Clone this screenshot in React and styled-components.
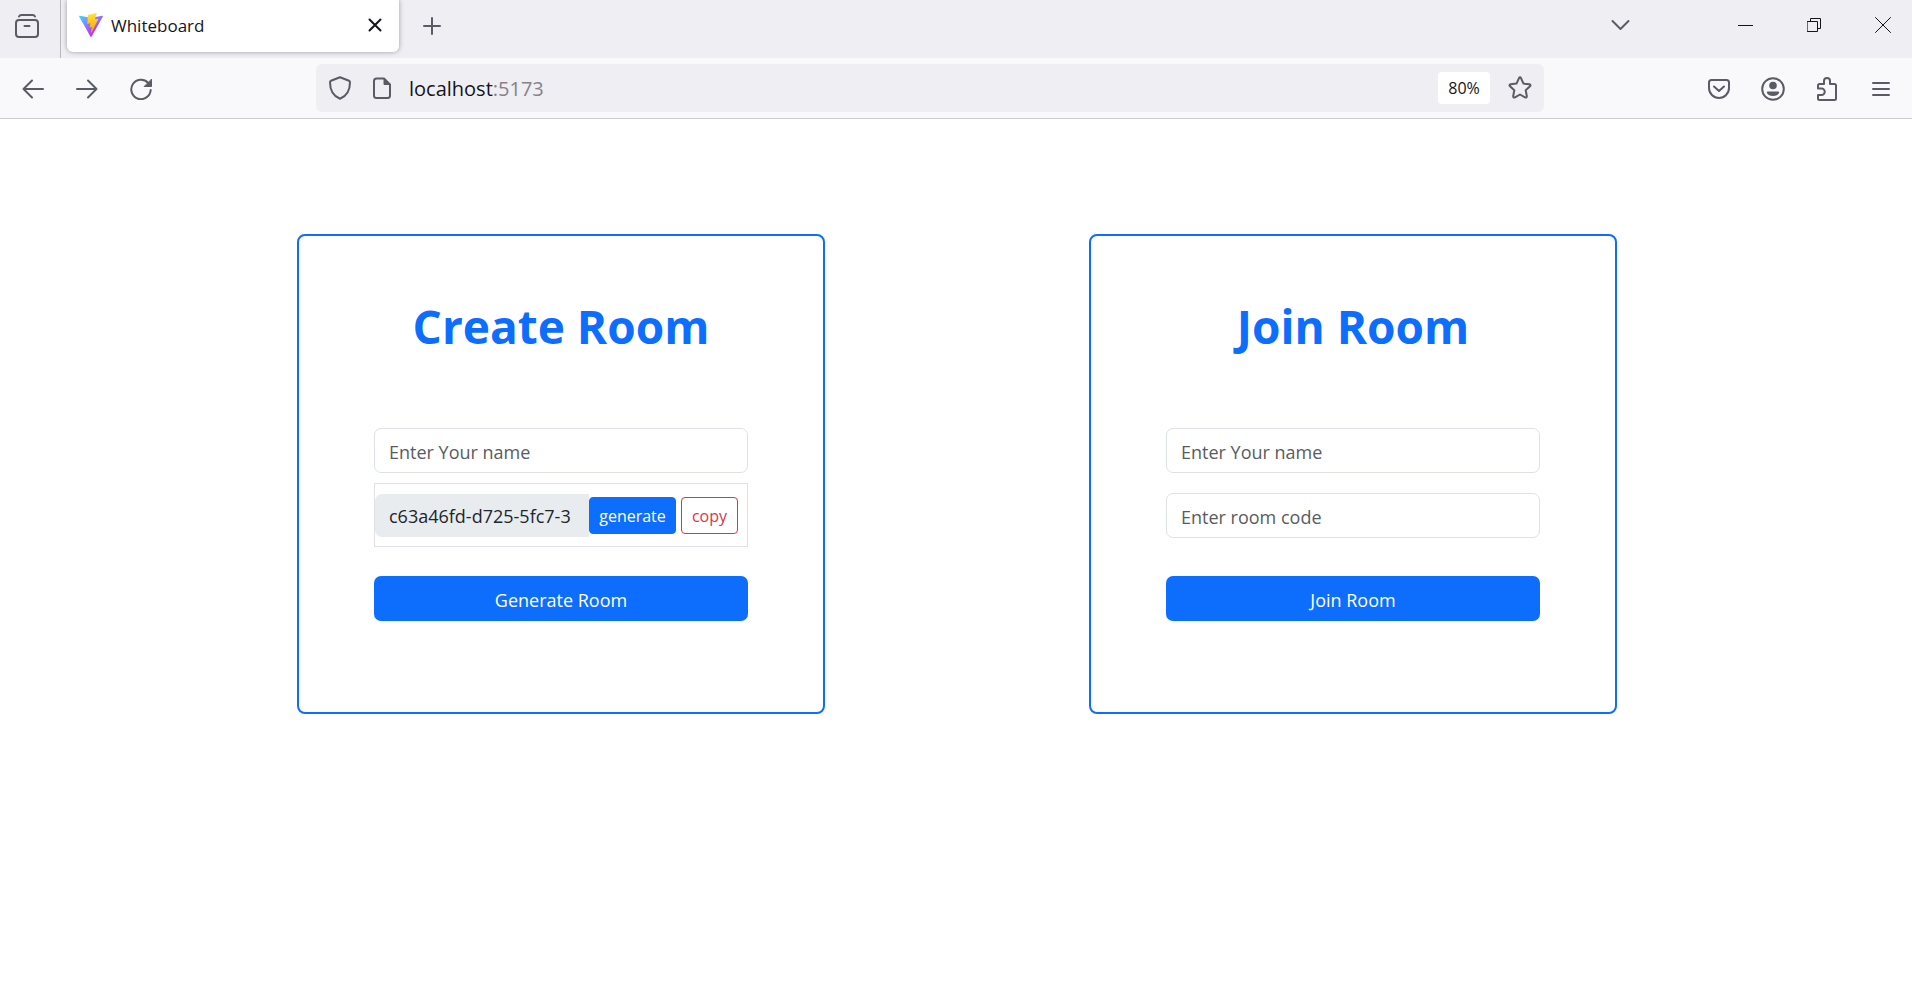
import React from 'react';
import styled, { createGlobalStyle, css } from 'styled-components';

const GlobalStyle = createGlobalStyle`
  *, *::before, *::after { box-sizing: border-box; }
  html, body { margin: 0; background: #fff; }
  body, input, button { font-family: "Open Sans", "Noto Sans", sans-serif; }
  svg { display: block; flex: none; }
`;

const Page = styled.div`
  min-height: 100vh;
  display: flex;
  flex-direction: column;
`;

const TabStrip = styled.header`
  display: flex;
  height: 58px;
  background: #efeef3;
  color: #15141a;
`;

const IconButton = styled.button`
  display: flex;
  align-items: center;
  justify-content: center;
  flex: none;
  width: ${(p) => p.$width || 54}px;
  height: ${(p) => p.$height || 48}px;
  padding: 0;
  border: 0;
  background: transparent;
  color: ${(p) => p.$color || '#5b5b66'};
  cursor: pointer;
`;

const Recent = styled.div`
  display: flex;
  flex: none;
  width: 61px;
  padding: 2px 0 0 0;
  border-right: 1px solid #b8b8be;
`;

const Tab = styled.div`
  display: flex;
  align-items: center;
  flex: none;
  width: 332px;
  height: 52px;
  margin: 0 0 0 6px;
  padding: 0 1px 2px 12px;
  border-radius: 0 0 6px 6px;
  background: #fff;
  box-shadow: 0 0 5px rgba(0, 0, 0, 0.35);
`;

const TabTitle = styled.span`
  flex: 1;
  margin-left: 8px;
  padding-top: 2px;
  font-size: 17px;
  line-height: 24px;
`;

const Spacer = styled.div`
  flex: 1;
`;

const WindowControls = styled.div`
  display: flex;
  gap: 11px;
  margin-left: 73px;
`;

const Toolbar = styled.nav`
  display: flex;
  justify-content: space-between;
  height: 61px;
  padding: 6px 4px 6px 6px;
  border-bottom: 1px solid #cccccf;
  background: #f9f9fb;
`;

const ToolGroup = styled.div`
  display: flex;
  flex: none;
  width: ${(p) => p.$width}px;
  padding-top: 1px;
  justify-content: ${(p) => p.$align || 'flex-start'};
`;

const AddressBar = styled.div`
  display: flex;
  align-items: center;
  flex: 1;
  height: 48px;
  padding: 0 0 0 3px;
  border-radius: 6px;
  background: #efeef3;
`;

const Address = styled.div`
  flex: 1;
  margin-left: 6px;
  padding-top: 2px;
  color: #15141a;
  font-size: 20px;
  line-height: 28px;
  outline: 0;
`;

const Port = styled.span`
  color: #84838a;
`;

const Zoom = styled.button`
  width: 52px;
  height: 32px;
  margin-right: 6px;
  padding: 0;
  border: 0;
  border-radius: 4px;
  background: #fff;
  color: #15141a;
  font-size: 16px;
  line-height: 24px;
`;

const Rooms = styled.main`
  display: grid;
  grid-template-columns: 1fr 1fr;
  gap: 264px;
  padding: 115px 295px 48px 297px;

  @media (max-width: 1500px) {
    gap: 64px;
    padding: 64px;
  }
  @media (max-width: 1000px) {
    grid-template-columns: 1fr;
  }
`;

const Card = styled.section`
  min-height: 480px;
  padding: 60px 75px 48px;
  border: 2px solid #0d6efd;
  border-radius: 8px;
`;

const Title = styled.h1`
  margin: 0 0 72px;
  color: #0d6efd;
  font-size: 46px;
  font-weight: 700;
  line-height: 60px;
  text-align: center;
`;

const Form = styled.form`
  display: flex;
  flex-direction: column;
`;

const field = css`
  width: 100%;
  padding: 2px 14px 0;
  font-size: 18px;
  line-height: 28px;
  color: #212529;
  outline: 0;
  &::placeholder { color: #595c5f; opacity: 1; }
`;

const TextField = styled.input`
  ${field}
  height: 45px;
  margin-top: ${(p) => p.$gap || 0}px;
  border: 1px solid #dee2e6;
  border-radius: 7px;
  background: #fff;
`;

const CodeGroup = styled.div`
  display: flex;
  align-items: center;
  height: 64px;
  margin-top: 10px;
  padding-right: 9px;
  border: 1px solid #dee2e6;
`;

const CodeField = styled.input`
  ${field}
  flex: 1;
  min-width: 0;
  height: 43px;
  border: 0;
  border-radius: 7px 0 0 7px;
  background: #e9ecef;
`;

const SmallButton = styled.button`
  flex: none;
  width: ${(p) => p.$width}px;
  height: 37px;
  margin-left: ${(p) => p.$gap || 0}px;
  padding: 1px 0 0;
  border: 1px solid ${(p) => (p.$outline ? '#dc3545' : '#0d6efd')};
  border-radius: 4px;
  background: ${(p) => (p.$outline ? '#fff' : '#0d6efd')};
  color: ${(p) => (p.$outline ? '#dc3545' : '#fff')};
  font-size: 16px;
  line-height: 24px;
`;

const SubmitButton = styled.button`
  height: 45px;
  margin-top: ${(p) => p.$gap}px;
  padding: 2px 0 0;
  border: 0;
  border-radius: 7px;
  background: #0d6efd;
  color: #fff;
  font-size: 18px;
  line-height: 28px;
`;

const Icon = ({ w, h, sw = 2, children }) => (
  <svg width={w} height={h} viewBox={`0 0 ${w} ${h}`} fill="none" stroke="currentColor"
    strokeWidth={sw} strokeLinecap="round" strokeLinejoin="round" aria-hidden="true">
    {children}
  </svg>
);

const RecentIcon = () => (
  <Icon w={24} h={24}><path d="M4 2.5Q4.6 1 6.5 1h11q1.900 0 2.500 1.500" /><rect x="1" y="6" width="22" height="17" rx="3" /><path d="M9.500 12h5" /></Icon>
);
const ViteIcon = () => (
  <svg width="24" height="24" viewBox="0 0 256 257" aria-hidden="true">
    <defs>
      <linearGradient id="viteBody" x1="-.828%" x2="57.636%" y1="7.652%" y2="78.411%">
        <stop offset="0%" stopColor="#41D1FF" /><stop offset="100%" stopColor="#BD34FE" />
      </linearGradient>
      <linearGradient id="viteBolt" x1="43.376%" x2="50.316%" y1="2.242%" y2="89.030%">
        <stop offset="0%" stopColor="#FFEA83" /><stop offset="8.333%" stopColor="#FFDD35" /><stop offset="100%" stopColor="#FFA800" />
      </linearGradient>
    </defs>
    <path fill="url(#viteBody)" d="M255.153 37.938L134.897 252.976c-2.483 4.440-8.862 4.466-11.382.048L.875 37.958c-2.746-4.814 1.371-10.646 6.827-9.670l120.385 21.517a6.537 6.537 0 0 0 2.322-.004l117.867-21.483c5.438-.991 9.574 4.796 6.877 9.620Z" />
    <path fill="url(#viteBolt)" d="M185.432.063L96.440 17.501a3.268 3.268 0 0 0-2.634 3.014l-5.474 92.456a3.268 3.268 0 0 0 3.997 3.378l24.777-5.718c2.318-.535 4.413 1.507 3.936 3.838l-7.361 36.047c-.495 2.426 1.782 4.500 4.151 3.780l15.304-4.649c2.372-.720 4.652 1.360 4.150 3.788l-11.698 56.621c-.732 3.542 3.979 5.473 5.943 2.437l1.313-2.028l72.516-144.720c1.215-2.423-.880-5.186-3.540-4.672l-25.505 4.922c-2.396.462-4.435-1.770-3.759-4.114l16.646-57.705c.677-2.350-1.370-4.583-3.769-4.113Z" />
  </svg>
);
const TabCloseIcon = () => <Icon w={14} h={14}><path d="M1.500 1.500l11 11M12.500 1.500l-11 11" /></Icon>;
const PlusIcon = () => <Icon w={18} h={18}><path d="M9 1v16M1 9h16" /></Icon>;
const ChevronIcon = () => <Icon w={19} h={12}><path d="M1.500 2l8 8 8-8" /></Icon>;
const MinimizeIcon = () => <Icon w={15} h={1} sw={1}><path d="M0 .5h15" /></Icon>;
const RestoreIcon = () => (
  <Icon w={14} h={14} sw={1}><path d="M.5 3.500h10v10h-10zM3.500 3.500v-3h10v10h-3" /></Icon>
);
const WindowCloseIcon = () => <Icon w={16} h={16} sw={1}><path d="M.5.500l15 15M15.500.500l-15 15" /></Icon>;
const BackIcon = () => <Icon w={22} h={20}><path d="M21 10H1.500M10 1.500L1.500 10l8.500 8.500" /></Icon>;
const ForwardIcon = () => <Icon w={22} h={20}><path d="M1 10h19.500M12 1.500l8.500 8.500-8.500 8.500" /></Icon>;
const ReloadIcon = () => (
  <Icon w={22} h={22}><path d="M18 4.700A9.700 9.700 0 1 0 20.700 12" /><path fill="currentColor" strokeWidth="1" d="M21.500 1.500v7h-7z" /></Icon>
);
const ShieldIcon = () => (
  <Icon w={22} h={24}><path d="M11 1.200l9 3.600q1 .4 1 1.500c0 8-3 13.700-10 16.500C4 20 1 14.300 1 6.300q0-1.100 1-1.500z" /></Icon>
);
const PageIcon = () => (
  <Icon w={18} h={22}><path d="M3.500 1.500H11l6 6v11q0 2.500-2.500 2.500h-11Q1 21 1 18.500V4q0-2.500 2.500-2.500z" /><path fill="currentColor" strokeWidth="1" d="M11 1.500v6h6z" /></Icon>
);
const StarIcon = () => (
  <Icon w={24} h={24}><path d="M10.900 2.300q1.100-1.900 2.200 0l2.400 5.300 5.800.7q2 .5.700 2l-4.300 4 1.100 5.700q.1 2.100-1.800 1.300L12 18.500l-5 2.800q-1.900.8-1.800-1.300l1.100-5.700-4.300-4q-1.300-1.500.7-2l5.800-.7z" /></Icon>
);
const PocketIcon = () => (
  <Icon w={22} h={20}><path d="M3.500 1h15Q21 1 21 3.500V9a10 10 0 0 1-20 0V3.500Q1 1 3.500 1z" /><path d="M6 7.500l5 4.500 5-4.500" /></Icon>
);
const AccountIcon = () => (
  <Icon w={24} h={24}><circle cx="12" cy="12" r="10.800" /><circle cx="12" cy="8.500" r="3.800" fill="currentColor" stroke="none" /><path fill="currentColor" stroke="none" d="M7 14.500h10q1.500 0 1.200 1.300Q16.500 19 12 19t-6.200-3.200Q5.500 14.500 7 14.500z" /></Icon>
);
const PuzzleIcon = () => (
  <Icon w={20} h={24}><path d="M1 10.500V8.500Q1 7 2.500 7H7V4a3 3 0 0 1 6 0v3h4.500Q19 7 19 8.500v13q0 1.500-1.500 1.500h-15Q1 23 1 21.500V18h3.500a2.500 2.500 0 0 0 0-6.500H1z" /></Icon>
);
const MenuIcon = () => <Icon w={18} h={16}><path d="M1 2h16M1 8h16M1 14h16" /></Icon>;

export default function App() {
  const stop = (e) => e.preventDefault();
  return (
    <Page>
      <GlobalStyle />
      <TabStrip>
        <Recent>
          <IconButton aria-label="Recent browsing"><RecentIcon /></IconButton>
        </Recent>
        <Tab>
          <ViteIcon />
          <TabTitle>Whiteboard</TabTitle>
          <IconButton $width={46} $color="#15141a" aria-label="Close tab"><TabCloseIcon /></IconButton>
        </Tab>
        <IconButton $width={66} $height={52} aria-label="New tab"><PlusIcon /></IconButton>
        <Spacer />
        <IconButton $width={46} $height={50} aria-label="List all tabs"><ChevronIcon /></IconButton>
        <WindowControls>
          <IconButton $width={58} $height={50} $color="#15141a" aria-label="Minimize"><MinimizeIcon /></IconButton>
          <IconButton $width={58} $height={50} $color="#15141a" aria-label="Restore"><RestoreIcon /></IconButton>
          <IconButton $width={58} $height={50} $color="#15141a" aria-label="Close window"><WindowCloseIcon /></IconButton>
        </WindowControls>
      </TabStrip>
      <Toolbar>
        <ToolGroup $width={310}>
          <IconButton aria-label="Back"><BackIcon /></IconButton>
          <IconButton aria-label="Forward"><ForwardIcon /></IconButton>
          <IconButton aria-label="Reload"><ReloadIcon /></IconButton>
        </ToolGroup>
        <AddressBar>
          <IconButton $width={42} aria-label="Tracking protection"><ShieldIcon /></IconButton>
          <IconButton $width={42} aria-label="Site information"><PageIcon /></IconButton>
          <Address role="textbox" aria-label="Address" contentEditable suppressContentEditableWarning spellCheck={false}>
            localhost<Port>:5173</Port>
          </Address>
          <Zoom>80%</Zoom>
          <IconButton $width={48} aria-label="Bookmark this page"><StarIcon /></IconButton>
        </AddressBar>
        <ToolGroup $width={364} $align="flex-end">
          <IconButton aria-label="Save to Pocket"><PocketIcon /></IconButton>
          <IconButton aria-label="Account"><AccountIcon /></IconButton>
          <IconButton aria-label="Extensions"><PuzzleIcon /></IconButton>
          <IconButton aria-label="Menu"><MenuIcon /></IconButton>
        </ToolGroup>
      </Toolbar>
      <Rooms>
        <Card>
          <Title>Create Room</Title>
          <Form onSubmit={stop}>
            <TextField aria-label="Your name" placeholder="Enter Your name" />
            <CodeGroup>
              <CodeField aria-label="Room code" readOnly value="c63a46fd-d725-5fc7-3" />
              <SmallButton type="button" $width={87}>generate</SmallButton>
              <SmallButton type="button" $width={57} $gap={5} $outline>copy</SmallButton>
            </CodeGroup>
            <SubmitButton type="submit" $gap={29}>Generate Room</SubmitButton>
          </Form>
        </Card>
        <Card>
          <Title>Join Room</Title>
          <Form onSubmit={stop}>
            <TextField aria-label="Your name" placeholder="Enter Your name" />
            <TextField aria-label="Room code" placeholder="Enter room code" $gap={20} />
            <SubmitButton type="submit" $gap={38}>Join Room</SubmitButton>
          </Form>
        </Card>
      </Rooms>
    </Page>
  );
}
